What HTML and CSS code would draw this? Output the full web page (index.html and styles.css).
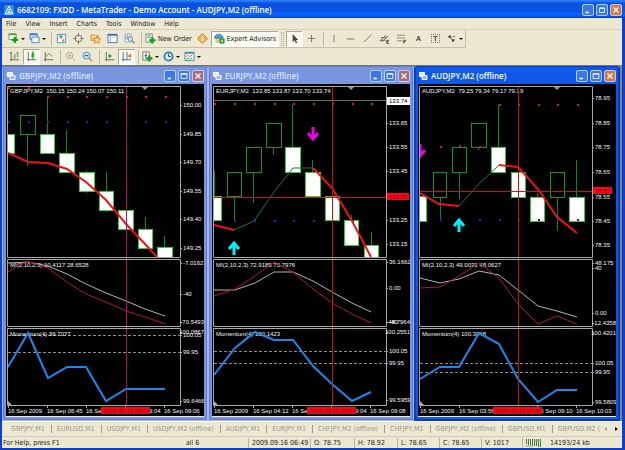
FILE: index.html
```html
<!DOCTYPE html>
<html lang="en">
<head>
<meta charset="utf-8">
<title>6682109: FXDD - MetaTrader</title>
<link rel="stylesheet" href="styles.css">
</head>
<body>
<div class="app">
  <header class="titlebar">
    <svg class="logo" viewBox="0 0 10 10"><rect width="10" height="10" rx="1" fill="#2d8fd0"/><path d="M5 1 9 9H1ZM5 4v4M3.2 7.400h3.600" fill="none" stroke="#fff"/></svg>
    <h1>6682109: FXDD - MetaTrader - Demo Account - AUDJPY,M2 (offline)</h1>
    <div class="winbtns">
      <button aria-label="Minimize"><svg viewBox="0 0 12 12"><path d="M3 9h4" stroke="#fff" stroke-width="2"/></svg></button>
      <button aria-label="Restore"><svg viewBox="0 0 12 12"><path d="M3 4h6v5H3zM3 3.500h6" fill="none" stroke="#fff"/></svg></button>
      <button class="close" aria-label="Close"><svg viewBox="0 0 12 12"><path d="m3 3 6 6M9 3 3 9" stroke="#fff" stroke-width="1.500"/></svg></button>
    </div>
  </header>
  <nav class="menu">
    <button>File</button><button>View</button><button>Insert</button><button>Charts</button><button>Tools</button><button>Window</button><button>Help</button>
  </nav>
  <div class="toolbar main">
    <button class="drop" aria-label="New chart"><svg viewBox="0 0 12 12"><path d="M1 1h8v6H1z" fill="#fff" stroke="#7a9a78"/><path d="M1 1.500h8" stroke="#4f9a50" stroke-width="2"/><path d="M7.500 4v7M4 7.500h7" stroke="#16a016" stroke-width="2.500"/></svg></button>
    <button class="drop" aria-label="Profiles"><svg viewBox="0 0 12 12"><path d="M1 1h8v6H1z" fill="#dceafa" stroke="#4a7fc0"/><path d="M3 4.500h8v6H3z" fill="#f4f9ff" stroke="#4a7fc0"/><path d="M1 1.500h8" stroke="#3d78c8" stroke-width="2"/></svg></button>
    <i class="sep"></i>
    <button aria-label="Market Watch"><svg viewBox="0 0 12 12"><path d="M1.500 1.500h9v9h-9z" fill="#fff" stroke="#4a8bc8"/><path d="m3 6 3-3M4 3h2.500v3z" fill="#3aa040" stroke="#3aa040"/><path d="m9 6-3 3 3 .5z" fill="#e07040"/></svg></button>
    <button aria-label="Data Window"><svg viewBox="0 0 12 12"><circle cx="6" cy="6" r="3.500" fill="none" stroke="#8a877c" stroke-width="1.200"/><path d="M6 0v4M6 8v4M0 6h4M8 6h4" stroke="#77746a"/></svg></button>
    <button aria-label="Navigator"><svg viewBox="0 0 12 12"><path d="M1 2h4l1 1h3v5H1z" fill="#fbd48a" stroke="#d99030"/><path d="m7.500 3.500 1.200 2.400 2.800.2-2 2 .6 3-2.600-1.400-2.600 1.400.6-3-2-2 2.800-.2z" fill="#ffe4a8" stroke="#dd7722"/></svg></button>
    <button aria-label="Terminal"><svg viewBox="0 0 12 12"><path d="M1 1.500h10v9H1z" fill="#fff" stroke="#3d70b8"/><path d="M1 2h10" stroke="#3d70b8" stroke-width="2"/><path d="M3.500 3v7" stroke="#7aa0d0"/><path d="M5 5h4" stroke="#bcd"/></svg></button>
    <button aria-label="Strategy Tester"><svg viewBox="0 0 12 12"><path d="M1 1h7v9H1z" fill="#e8eef4" stroke="#9ab0c4"/><path d="M2 3v4M4 2v5M6 3v3" stroke="#6a90b8"/><circle cx="7" cy="6.500" r="2.500" fill="#cfe4f6" stroke="#6d90b0"/><path d="m9 8.500 2.500 3" stroke="#b08a30" stroke-width="1.500"/></svg></button>
    <i class="sep"></i>
    <button class="text"><svg viewBox="0 0 12 12"><path d="M1 1h7v9H1z" fill="#fff" stroke="#6a8a6a"/><path d="M2.500 3h4M2.500 5h4" stroke="#5a8a5a"/><path d="M8 4.500v7M4.500 8h7" stroke="#16a016" stroke-width="2.500"/></svg>New Order</button>
    <button aria-label="MetaEditor"><svg viewBox="0 0 12 12"><path d="M6 .5 11.500 6 6 11.500.5 6z" fill="#f6b450" stroke="#c87a20"/><path d="M6 3v1.200M6 5.500V9" stroke="#fff" stroke-width="1.500"/></svg></button>
    <button class="text pressed"><svg viewBox="0 0 12 12"><circle cx="5" cy="7.500" r="3.500" fill="#edc070"/><path d="M1 5c0-5 8-5 9 0z" fill="#5ca8e0" stroke="#3a80c0"/><path d="M0 5.500h10" stroke="#3a80c0"/><path d="M6 6h5.500v5.500H6z" fill="#18a028"/><path d="m8 7.300 2.300 1.500L8 10.300z" fill="#fff"/></svg>Expert Advisors</button>
    <i class="grip"></i>
    <button class="pressed" aria-label="Cursor"><svg viewBox="0 0 12 12"><path d="M4 1v9l2-2 1.500 3.200 1.500-.7L7.500 7.500H10z" fill="#444"/></svg></button>
    <button aria-label="Crosshair"><svg viewBox="0 0 12 12"><path d="M6 2v8M2 6h8" stroke="#77746a"/></svg></button>
    <i class="sep"></i>
    <button aria-label="Vertical line"><svg viewBox="0 0 12 12"><path d="M6.500 2v8" stroke="#77746a"/></svg></button>
    <button aria-label="Horizontal line"><svg viewBox="0 0 12 12"><path d="M2 6.500h8" stroke="#66635a"/></svg></button>
    <button aria-label="Trendline"><svg viewBox="0 0 12 12"><path d="m2 10 8-8" stroke="#77746a"/></svg></button>
    <button aria-label="Channel"><svg viewBox="0 0 12 12"><path d="m1 9 7-7M3 10l7-7M2 5h7M1 8h6" stroke="#66635a"/><path d="M11 8H8.500v3.500H11M8.500 9.500h2" stroke="#444" fill="none"/></svg></button>
    <button aria-label="Fibonacci"><svg viewBox="0 0 12 12"><path d="M1 2.500h9M1 5.500h9M1 8.500h6" stroke="#8a877c"/><path d="M11 8H8.500v3.500M8.500 9.500h2" stroke="#444" fill="none"/></svg></button>
    <button class="glyph">A</button>
    <button class="glyph" aria-label="Text label"><span class="boxed">T</span></button>
    <button class="drop" aria-label="Arrows"><svg viewBox="0 0 12 12"><path d="m2 5 2.500-3L6 5z" fill="#333"/><path d="m3 4 5 4" stroke="#555"/><path d="m10 7-2.500 3L6 7z" fill="#333"/><path d="M7 4h3" stroke="#777"/></svg></button>
  </div>
  <div class="toolbar">
    <button aria-label="Bar chart"><svg viewBox="0 0 12 12"><path d="M2.500 1v10M1 9.500h10M1 3l1.500-2" fill="none" stroke="#66635a"/><path d="M6.500 3v5M9.500 1v6M8 2.500h1.500M6.500 7H5" stroke="#2d9a3c"/></svg></button>
    <button class="pressed" aria-label="Candlesticks"><svg viewBox="0 0 12 12"><path d="M2.500 1v10M1 9.500h10" stroke="#66635a"/><path d="M7.500 0v10" stroke="#2d9a3c"/><path d="M6 2h3v5H6z" fill="#22b030"/></svg></button>
    <button aria-label="Line chart"><svg viewBox="0 0 12 12"><path d="M2.500 1v10M1 9.500h10" stroke="#66635a"/><path d="M3 7c2-5 4-5 7-1" fill="none" stroke="#4c8a5a"/></svg></button>
    <i class="sep"></i>
    <button aria-label="Zoom in"><svg viewBox="0 0 12 12"><circle cx="5" cy="5" r="3.500" fill="#e5e3d8" stroke="#aaa79a"/><path d="M3.500 5h3M5 3.500v3M8 8l3 3" stroke="#aaa79a"/></svg></button>
    <button aria-label="Zoom out"><svg viewBox="0 0 12 12"><circle cx="5" cy="5" r="3.800" fill="#d4ecff" stroke="#3a88d8"/><path d="M3 5h4" stroke="#2868b8" stroke-width="1.500"/><path d="m8 8 3 3" stroke="#d0a030" stroke-width="2"/></svg></button>
    <i class="sep"></i>
    <button aria-label="Auto scroll"><svg viewBox="0 0 12 12"><path d="M2.500 1v10M1 9.500h10" stroke="#66635a"/><path d="m5 3 4 2.500L5 8z" fill="#2da03c"/></svg></button>
    <button class="pressed" aria-label="Chart shift"><svg viewBox="0 0 12 12"><path d="M2.500 1v10M1 9.500h10M6.500 1v8" stroke="#55628a"/><path d="m11 3-4 2.500L11 8z" fill="#d07820"/></svg></button>
    <i class="sep"></i>
    <button class="drop" aria-label="Indicators"><svg viewBox="0 0 12 12"><path d="M1 1h7v9H1z" fill="#fff" stroke="#6a7a6a"/><path d="M5.500 3c-1.500-1-1.500 0-1.500 5M3 5h2.500" fill="none" stroke="#446"/><path d="M8 4.500v7M4.500 8h7" stroke="#16a016" stroke-width="2.500"/></svg></button>
    <button class="drop" aria-label="Periodicity"><svg viewBox="0 0 12 12"><circle cx="6" cy="6" r="4.500" fill="#e6f3ff" stroke="#2a78d0" stroke-width="2"/><path d="M6 3v3h2.500" fill="none" stroke="#335"/></svg></button>
    <button class="drop" aria-label="Templates"><svg viewBox="0 0 12 12"><path d="M1 1.500h10v9H1z" fill="#eef8ff" stroke="#4a80b0"/><path d="M1 2h10" stroke="#4a88c8" stroke-width="2"/><path d="m2 6 2-1 2 1 3-1.500" fill="none" stroke="#d07030"/><path d="m2 9 2-1 2 1 3-1.500" fill="none" stroke="#30a040"/></svg></button>
  </div>
  <main class="workspace" id="workspace"></main>
  <div class="tabs">
    <div class="tablist">
      <button>GBPJPY,M1</button><button>EURUSD,M1</button><button>USDJPY,M1</button><button>USDJPY,M2 (offline)</button><button>AUDJPY,M1</button><button>EURJPY,M1</button><button>CHFJPY,M2 (offline)</button><button>CHFJPY,M1</button><button>GBPJPY,M2 (offline)</button><button>GBPUSD,M1</button><button>GBPUSD,M2 (</button>
    </div>
    <button class="scroll dim" aria-label="Scroll tabs left"></button>
    <button class="scroll right" aria-label="Scroll tabs right"></button>
  </div>
  <footer class="status">
    <span class="first">For Help, press F1</span><span class="plain">all 6</span><span>2009.09.16 06:49</span><span>O: 78.75</span><span>H: 78.92</span><span>L: 78.65</span><span>C: 78.65</span><span>V: 1017</span>
    <span><svg class="signal" viewBox="0 0 15 9"><path d="M.5 1v5M2.500 1v6M4.500 1v6M6.500 1v7M8.500 1v7M10.500 1v7M12.500 1v8M14.500 1v8" stroke="#3f7a4c"/><path d="M0 8h7M8 3h7" stroke="#8fae3a" stroke-width="1"/></svg></span><span class="plain">14193/24 kb</span>
  </footer>
</div>
<script src="charts.js"></script>
</body>
</html>
```
FILE: styles.css
```css
* { box-sizing: border-box; }
body { margin: 0; font: 7px/10px "DejaVu Sans Condensed", "DejaVu Sans", sans-serif; color: #222; background: #ece9d8; }
button { font: inherit; color: inherit; background: none; border: 0; padding: 0; margin: 0; }
.app { min-height: 100vh; display: flex; flex-direction: column; background: #ece8d2; border: solid #0a3fd0; border-width: 0 3px 3px 2px; }
.titlebar { height: 18px; margin: 0 -3px 0 -2px; padding: 1px 3px 0 4px; display: flex; align-items: center; gap: 3px; background: linear-gradient(#2f86ff, #0a50dc 20%, #0a54e4 60%, #0866fc 80%, #0440c8); }
.logo { width: 10px; height: 10px; }
.titlebar h1 { flex: 1; margin: 0; font: 600 8px/12px "Open Sans", sans-serif; color: #fff; white-space: nowrap; }
.winbtns { display: flex; gap: 2px; }
.winbtns button { width: 12px; height: 12px; border: 1px solid #b8d0ff; border-radius: 2px; background: #3a78e8; }
.winbtns svg { display: block; width: 10px; height: 10px; }
.winbtns .close { background: #d8783a; }
.menu { display: flex; height: 12px; padding-left: 4px; gap: 9px; align-items: center; border-bottom: 1px solid #d4d0bc; }
.toolbar { display: flex; height: 17px; align-items: center; padding-left: 4px; }
.toolbar.main { align-self: flex-start; height: 18px; border: solid #c4c0ac; border-width: 0 1px 1px 0; }
.toolbar button { width: 17px; height: 16px; display: flex; align-items: center; justify-content: center; white-space: nowrap; }
.toolbar svg { width: 11px; height: 11px; flex: none; }
.toolbar .drop { width: 21px; gap: 2px; }
.drop::after { content: ""; border: solid transparent; border-width: 2px 2px 0; border-top-color: #111; }
.toolbar .text { width: auto; padding: 0 2px; gap: 2px; }
.toolbar .pressed { background: #f8f7f0; border: 1px solid; border-color: #aca899 #fff #fff #aca899; }
.toolbar .glyph { font-weight: bold; color: #555; }
.boxed { border: 1px dotted #777; width: 9px; height: 9px; line-height: 8px; }
.sep { width: 4px; height: 14px; border-right: 1px solid #c0bca8; margin-right: 1px; }
.grip { width: 3px; height: 14px; margin: 0 2px; border: dotted #aca899; border-width: 0 1px; }
.workspace { flex: 1; display: grid; grid-template-columns: repeat(3, minmax(0, 1fr)); padding-right: 2px; background: #85837a; align-items: start; border-top: 1px solid #77746a; }
.window { background: #7a96df; padding: 0 3px 3px; border: 1px solid #a5b9ee; border-top: 0; border-radius: 4px 4px 0 0; box-shadow: inset 0 0 0 1px #5f7cc8; }
.window.active { background: #1058e8; border-color: #0838b8; box-shadow: inset 0 0 0 1px #0840c8; }
.window header { display: flex; align-items: center; height: 18px; gap: 3px; padding: 1px 0 0 1px; }
.window header svg.mini { width: 9px; height: 9px; }
.window h2 { margin: 0; flex: 1; font: 600 8px/12px "Open Sans", sans-serif; color: #d8e2f8; }
.window.active h2 { color: #fff; }
.window:not(.active) .close { background: #b06a70; }
.chart { display: block; width: 100%; background: #000; border-bottom: 1px solid #eee; }
.chart text { font: 6px "Liberation Sans", Arial, sans-serif; fill: #f4f4f4; white-space: pre; }
.chart text.end { text-anchor: end; }
.chart text.dark { fill: #000; }
.chart text.cursor { fill: #700028; }
.tabs { display: flex; height: 15px; align-items: center; color: #9c998a; border-top: 1px solid #fff; }
.tablist { flex: 1; display: flex; overflow: hidden; }
.tablist button { flex: none; padding: 0 6px 0 5px; border-right: 1px solid #9c998a; line-height: 8px; white-space: nowrap; }
.tablist button:first-child { padding-left: 9px; }
.tablist button:last-child { border-right: 0; padding-right: 0; }
.scroll { width: 11px; height: 8px; display: flex; justify-content: center; align-items: center; }
.scroll::after { content: ""; border: 2px solid transparent; border-right: 3px solid #aaa79a; border-left: 0; }
.scroll.right::after { border-right: 0; border-left: 3px solid #111; }
.status { height: 12px; display: grid; grid-template-columns: 181fr 65fr 62fr 44fr 43fr 42fr 42fr 41fr 25fr 75fr; align-items: center; border-top: 1px solid #d0ccb8; white-space: nowrap; }
.status span { border-left: 1px solid #b8b4a0; padding-left: 3px; height: 10px; }
.status .first { border: 0; padding-left: 1px; }
.status .plain { border: 0; }
.signal { width: 15px; height: 9px; display: block; }
```
FILE: charts.js
```js
// Candle: [left, width, top, bottom, filled, wickTop, wickBottom]
const charts = [
  {
    name: "GBPJPY,M2", quote: "150.15 150.24 150.07 150.11",
    prices: [["150.00", 21], ["149.85", 50], ["149.70", 78], ["149.55", 107], ["149.40", 135], ["149.25", 164]],
    candles: [[-6, 16, 50, 69, 1, 40, 50], [14, 16, 31, 50, 0, 50, 82], [34, 15, 50, 69, 1, 13, 50], [53, 16, 69, 88, 1, 46, 69], [73, 16, 88, 107, 1, 86, 109], [93, 15, 107, 126, 1, 88, 128], [112, 16, 126, 145, 1, 126, 145], [132, 15, 145, 164, 1, 133, 164], [151, 16, 163, 182, 1, 152, 163]],
    red: [[2, 4], [22, 4], [41, 13], [61, 13], [80, 13], [100, 13], [120, 13], [139, 13], [159, 13]],
    blue: [2, 22, 41, 61, 80, 100, 139, 159].map(x => [x, 38]),
    ma: [["#f41018", "2,69 22,78 42,79 61,85 80,98 100,116 120,140 139,160 151,173"]],
    vline: 120, vcolor: "#9a1080", vdash: true,
    miTitle: "MI(2,10,2,3) 10.4117 28.6528",
    miGrey: "2,179 22,178 42,182 61,190 80,200 100,209 120,217 139,225 159,232",
    miRed: "2,188 13,181 23,178 42,184 61,198 80,210 100,218 120,227 139,233 159,240",
    miLabels: [["-7.0162", 179], ["-40", 210], ["-70.5493", 238]],
    momTitle: "Momentum(4) 99.7077",
    mom: "2,283 22,249 42,294 61,283 80,283 100,317 120,305 159,305",
    momLabels: [["100.0867", 248], ["100.05", 251], ["99.95", 268], ["99.6466", 317]], levels: [251, 268],
    times: [["16 Sep 2009", 2], ["16 Sep 06:45", 41], ["16 Sep 09:00", 80], ["16 Sep 09:04", 119], ["16 Sep 09:06", 158]],
    cursor: ["2009.09.16 09:04", 95]
  },
  {
    name: "EURJPY,M2", quote: "133.85 133.87 133.70 133.74",
    prices: [["133.65", 39], ["133.55", 63], ["133.45", 87], ["133.25", 136], ["133.15", 160]],
    bid: ["133.74", 17], cross: ["133.35", 113, 22],
    candles: [[-5, 16, 112, 136, 1, 87, 112], [15, 15, 88, 112, 0, 112, 138], [34, 16, 63, 88, 0, 88, 119], [54, 16, 39, 63, 0, 63, 71], [73, 16, 63, 88, 1, 21, 63], [93, 16, 88, 112, 1, 76, 88], [113, 15, 112, 136, 1, 112, 136], [132, 15, 136, 161, 1, 131, 136], [152, 15, 161, 182, 1, 148, 161]],
    red: [2, 22, 42, 62, 81, 101, 120, 140, 159].map(x => [x, 20]),
    blue: [22, 42, 62, 81, 101, 140].map(x => [x, 137]),
    ma: [["#f41018", "2,141 22,146"], ["#187a38", "22,146 42,137 62,108 81,84 101,84"], ["#f41018", "101,84 120,104 140,137 159,173"]],
    up: [22, 157], down: [101, 43],
    vline: 120, vcolor: "#c01810",
    miTitle: "MI(2,10,2,3) 72.9189 75.7976",
    miGrey: "2,206 23,206 43,199 62,188 81,188 101,197 120,208 140,219 159,228",
    miRed: "2,212 23,205 43,192 62,178 81,188 101,205 120,219 140,230 159,239",
    miLabels: [["36.1662", 178], ["0.00", 204], ["-40", 238], ["-48.7964", 238]],
    momTitle: "Momentum(4) 100.1423",
    mom: "2,291 23,264 43,248 62,256 81,256 101,282 120,300 140,317 159,308",
    momLabels: [["100.2551", 248], ["100.05", 267], ["99.95", 279], ["99.5959", 316]], levels: [267, 279],
    times: [["16 Sep 2009", 2], ["16 Sep 04:12", 41], ["16 Sep 09:00", 80], ["16 Sep 09:04", 119], ["16 Sep 09:08", 158]],
    cursor: ["2009.09.16 09:04", 95]
  },
  {
    name: "AUDJPY,M2", quote: "79.25 79.34 79.17 79.19", active: true,
    prices: [["78.95", 14], ["78.85", 39], ["78.75", 63], ["78.65", 88], ["78.55", 113], ["78.45", 137], ["78.35", 161]],
    cross: ["78.57", 107, 19],
    candles: [[-6, 16, 112, 137, 1, 93, 112], [15, 14, 88, 113, 0, 113, 136], [34, 15, 63, 88, 0, 88, 115], [53, 16, 39, 63, 0, 63, 66], [73, 15, 63, 88, 1, 21, 63], [93, 15, 88, 113, 1, 88, 113], [112, 15, 113, 137, 1, 109, 113], [132, 15, 88, 113, 0, 113, 147], [151, 16, 113, 137, 1, 76, 113]],
    red: [[22, 63], [41, 62], [61, 63], [81, 21], [100, 21], [120, 21], [139, 21], [159, 21]],
    blue: [22, 41, 61, 81, 100, 120, 139, 159].map(x => [x, 136]),
    ma: [["#f41018", "2,109 21,120 41,122"], ["#187a38", "41,122 61,100 81,81"], ["#f41018", "81,81 100,83 120,105 139,133 159,149"]],
    up: [41, 134], down: [2, 60],
    vline: 100, vcolor: "#c01810",
    miTitle: "MI(2,10,2,3) 49.0031 48.0627",
    miGrey: "2,194 22,199 41,195 61,187 81,191 100,206 120,222 139,227 159,233",
    miRed: "2,204 22,203 41,192 61,179 81,194 100,220 120,240 139,232 159,240",
    miLabels: [["48.175", 179], ["40", 184], ["0.00", 229], ["-12.4358", 239]],
    momTitle: "Momentum(4) 100.3048",
    mom: "2,295 22,283 41,283 61,249 81,260 100,295 120,318 139,306 159,306",
    momLabels: [["100.4201", 249], ["100.05", 279], ["99.95", 288], ["99.5809", 318]], levels: [279, 288],
    times: [["16 Sep 2009", 2], ["16 Sep 03:56", 41], ["16 Sep 09:10", 119], ["16 Sep 10:03", 158]],
    cursor: ["2009.09.16 09:05", 75]
  }
];

const text = (s, x, y, cls = "") => `<text x="${x}" y="${y + 2}" class="${cls}">${s}</text>`;
const line = (points, color, width = 1) => `<polyline points="${points}" fill="none" stroke="${color}" stroke-width="${width}"/>`;
const dots = (list, color) => list.map(([x, y]) => `<path d="M${x - 1} ${y}h3M${x} ${y - 1}h2v2h-2z" fill="${color}"/>`).join("");

function candle([x, w, top, bottom, filled, wickTop, wickBottom]) {
  return `<path d="M${x + 7}.5 ${wickTop}V${wickBottom}" stroke="#0a8a1c"/>` +
    `<rect x="${x}.5" y="${top}.5" width="${w - 1}" height="${bottom - top}" fill="${filled ? "#fff" : "#000"}" stroke="${filled ? "#30d030" : "#0c9a18"}"/>`;
}

// Long labels are right-aligned so that they stay inside the price scale.
function axisLabel([t, y]) {
  const label = t.length > 7 ? text(t, 198, y, "end") : text(t, 177, y);
  return `<path d="M175 ${y}.5h1" stroke="#a8a8a8"/>` + label;
}

function drawChart(c, i) {
  const axis = [...c.prices, ...c.miLabels, ...c.momLabels];
  let s = `<clipPath id="clip${i}"><rect x="2" y="2" width="172" height="171"/></clipPath><g clip-path="url(#clip${i})">`;
  if (c.bid) s += `<path d="M2 ${c.bid[1] - 1}.5H174" stroke="#5c6c78"/>`;
  s += c.candles.map(candle).join("") + dots(c.red, "#e81028") + dots(c.blue, "#3018c8");
  s += c.ma.map(([color, p]) => line(p, color, color === "#f41018" ? 2 : 1)).join("");
  if (c.up) s += `<path d="M${c.up[0]} ${c.up[1] + 14}v-12m-5 6 5-6 5 6" fill="none" stroke="#00f0f8" stroke-width="3"/>`;
  if (c.down) s += `<path d="M${c.down[0]} ${c.down[1]}v12m-5-6 5 6 5-6" fill="none" stroke="#f000f0" stroke-width="3"/>`;
  s += `</g>`;
  s += c.levels.map(y => `<path d="M2 ${y}.5H174" stroke="#8c8c8c" stroke-dasharray="3 2"/>`).join("");
  s += text(`${c.name}  ${c.quote}`, 4, 7) + text(c.miTitle, 4, 181) + text(c.momTitle, 4, 250);
  s += line(c.miGrey, "#b4b4b4") + line(c.miRed, "#b01830") + line(c.mom, "#1c88ee", 2);
  s += `<path d="M${c.vline}.5 2V321" stroke="${c.vcolor}"/>`;
  if (c.vdash) s += `<path d="M${c.vline}.5 2V321" stroke="#d01030" stroke-dasharray="2 3"/>`;
  if (c.cross) s += `<path d="M2 ${c.cross[1]}.5H174" stroke="#c01818"/>`;
  s += `<path d="M1.500 2.500H174.500V173.500H1.500zM1.500 175.500H174.500V242.500H1.500zM1.500 244.500H174.500V321.500H1.500z" fill="none" stroke="#a8a8a8"/>`;
  s += `<path d="M136 3h6l-3 3z" fill="#8a9aa4"/><path d="M2 317l4 4H2z" fill="#aab"/>`;
  s += axis.map(axisLabel).join("");
  s += c.times.map(([t, x]) => `<path d="M${x}.5 321v3" stroke="#a8a8a8"/>` + text(t, x, 327)).join("");
  s += `<rect x="${c.cursor[1]}" y="323" width="49" height="7" fill="#fb0810"/>` + text(c.cursor[0], c.cursor[1] + 2, 327, "cursor");
  if (c.bid) s += `<rect x="175" y="13" width="23" height="8" fill="#fff"/>` + text(c.bid[0], 177, 17, "dark");
  if (c.cross) s += `<rect x="175" y="${c.cross[1] - 4}" width="${c.cross[2]}" height="7" fill="#fb0810"/>` + text(c.cross[0], 177, c.cross[1], "cursor");
  return `<svg class="chart" viewBox="0 0 198 332" role="img" aria-label="${c.name}">${s}</svg>`;
}

document.getElementById("workspace").innerHTML = charts.map((c, i) => `
<section class="window${c.active ? " active" : ""}">
  <header>
    <svg class="mini" viewBox="0 0 9 9"><path d="M.5 1.500h5v4h-5z" fill="#dce8ff" stroke="#fff"/><path d="M3 4.500h5v4H3z" fill="#9ab8f0" stroke="#fff"/></svg>
    <h2>${c.name} (offline)</h2>
    <div class="winbtns">
      <button aria-label="Minimize"><svg viewBox="0 0 12 12"><path d="M3 9h4" stroke="#fff" stroke-width="2"/></svg></button>
      <button aria-label="Maximize"><svg viewBox="0 0 12 12"><path d="M2.500 3h7v6h-7zM2.500 4h7" fill="none" stroke="#fff"/></svg></button>
      <button class="close" aria-label="Close"><svg viewBox="0 0 12 12"><path d="m3 3 6 6M9 3 3 9" stroke="#fff" stroke-width="1.500"/></svg></button>
    </div>
  </header>
  ${drawChart(c, i)}
</section>`).join("");
```
